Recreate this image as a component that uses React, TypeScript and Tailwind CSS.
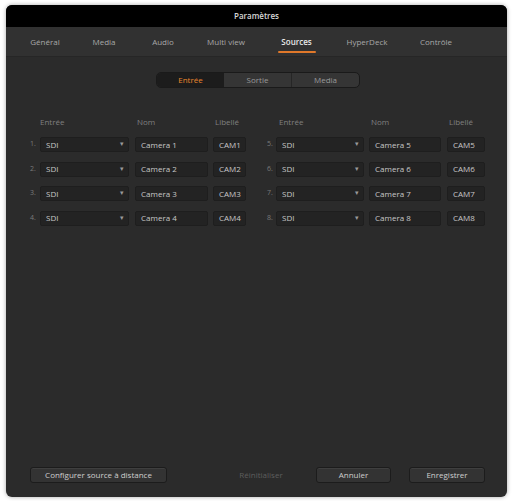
import React from 'react';

const font = { fontFamily: '"Open Sans", "Liberation Sans", sans-serif' };

const tabs = [
  { label: 'Général', w: 'w-[58px]' },
  { label: 'Media', w: 'w-[60px]' },
  { label: 'Audio', w: 'w-[58px]' },
  { label: 'Multi view', w: 'w-[68px]' },
  { label: 'Sources', w: 'w-[73px]', active: true },
  { label: 'HyperDeck', w: 'w-[68px]' },
  { label: 'Contrôle', w: 'w-[70px]' },
];

const rows = [
  [1, 'Camera 1', 'CAM1', 5, 'Camera 5', 'CAM5'],
  [2, 'Camera 2', 'CAM2', 6, 'Camera 6', 'CAM6'],
  [3, 'Camera 3', 'CAM3', 7, 'Camera 7', 'CAM7'],
  [4, 'Camera 4', 'CAM4', 8, 'Camera 8', 'CAM8'],
] as const;

const field = 'h-[15px] rounded-[2px] bg-[#232323] border border-[#1e1e1e] flex items-center text-[8px] text-[#c8c8c8]';

const Select: React.FC<{ w: string }> = ({ w }) => (
  <div className={`${field} ${w} justify-between pl-[5px] pr-[4px]`}>
    <span>SDI</span>
    <span className="text-[7px] text-[#9a9a9a]">▾</span>
  </div>
);

const Cell: React.FC<{ w: string; text: string; className?: string }> = ({ w, text, className = '' }) => (
  <div className={`${field} ${w} pl-[5px] ${className}`}>{text}</div>
);

const Button: React.FC<{ w: string; children: React.ReactNode; disabled?: boolean; className?: string }> = ({
  w,
  children,
  disabled,
  className = '',
}) => (
  <div
    className={`h-[16px] ${w} rounded-[3px] flex items-center justify-center text-[8px] ${
      disabled
        ? 'text-[#5e5e5e]'
        : 'bg-[#333333] border border-[#1c1c1c] text-[#cfcfcf] shadow-[inset_0_1px_0_rgba(255,255,255,0.06)]'
    } ${className}`}
  >
    {children}
  </div>
);

export default function App() {
  return (
    <div className="w-[512px] h-[501px] bg-white pt-[5px] pl-[6px]" style={font}>
      <div className="w-[501px] h-[492px] rounded-[6px] overflow-hidden bg-[#2b2b2b] flex flex-col shadow-[0_0_4px_rgba(0,0,0,0.35)]">
        {/* title bar */}
        <div className="h-[22px] bg-black flex items-center justify-center text-[8px] font-semibold text-[#d8d8d8]">
          Paramètres
        </div>

        {/* tabs */}
        <div className="h-[30px] bg-[#313131] flex pl-[10px] border-b border-[#262626]">
          {tabs.map((t) => (
            <div key={t.label} className={`${t.w} relative flex items-center justify-center text-[8px]`}>
              <span className={t.active ? 'text-[#e8e8e8] font-semibold' : 'text-[#a8a8a8]'}>{t.label}</span>
              {t.active && (
                <div className="absolute bottom-[3px] left-1/2 -translate-x-1/2 w-[38px] h-[2px] rounded-full bg-[#e0782a]" />
              )}
            </div>
          ))}
        </div>

        {/* input / output / media switch */}
        <div className="mt-[15px] ml-[150px] w-[204px] h-[16px] rounded-[5px] border border-[#1a1a1a] bg-[#353535] flex overflow-hidden text-[8px]">
          <div className="flex-1 bg-[#1c1c1c] text-[#e9862e] flex items-center justify-center">Entrée</div>
          <div className="flex-1 border-r border-[#262626] text-[#9a9a9a] flex items-center justify-center">Sortie</div>
          <div className="flex-1 text-[#9a9a9a] flex items-center justify-center">Media</div>
        </div>

        {/* column headers */}
        <div className="mt-[28px] flex pl-[24px] text-[8px] text-[#808080] h-[12px] items-center">
          <div className="w-[10px]" />
          <div className="w-[89px]">Entrée</div>
          <div className="w-[73px] ml-[6px] pl-[2px]">Nom</div>
          <div className="w-[33px] ml-[5px] pl-[2px]">Libellé</div>
          <div className="w-[9px] ml-[21px]" />
          <div className="w-[88px] pl-[3px]">Entrée</div>
          <div className="w-[72px] ml-[5px] pl-[2px]">Nom</div>
          <div className="w-[38px] ml-[6px] pl-[2px]">Libellé</div>
        </div>

        {/* source rows */}
        <div className="mt-[9px] flex flex-col gap-[9.5px]">
          {rows.map(([n1, name1, cam1, n2, name2, cam2]) => (
            <div key={n1} className="flex pl-[24px] items-center">
              <div className="w-[10px] text-[7px] text-[#7a7a7a]">{n1}.</div>
              <Select w="w-[89px]" />
              <Cell w="w-[73px]" text={name1} className="ml-[6px]" />
              <Cell w="w-[33px]" text={cam1} className="ml-[5px] pl-[3px]" />
              <div className="w-[9px] ml-[21px] text-[7px] text-[#7a7a7a]">{n2}.</div>
              <Select w="w-[88px]" />
              <Cell w="w-[72px]" text={name2} className="ml-[5px]" />
              <Cell w="w-[38px]" text={cam2} className="ml-[6px]" />
            </div>
          ))}
        </div>

        {/* footer actions */}
        <div className="mt-auto mb-[14px] flex items-center pl-[24px] pr-[22px]">
          <Button w="w-[137px]">Configurer source à distance</Button>
          <Button w="w-[72px]" disabled className="ml-auto">
            Réinitialiser
          </Button>
          <Button w="w-[75px]" className="ml-[19px]">
            Annuler
          </Button>
          <Button w="w-[76px]" className="ml-[18px]">
            Enregistrer
          </Button>
        </div>
      </div>
    </div>
  );
}
